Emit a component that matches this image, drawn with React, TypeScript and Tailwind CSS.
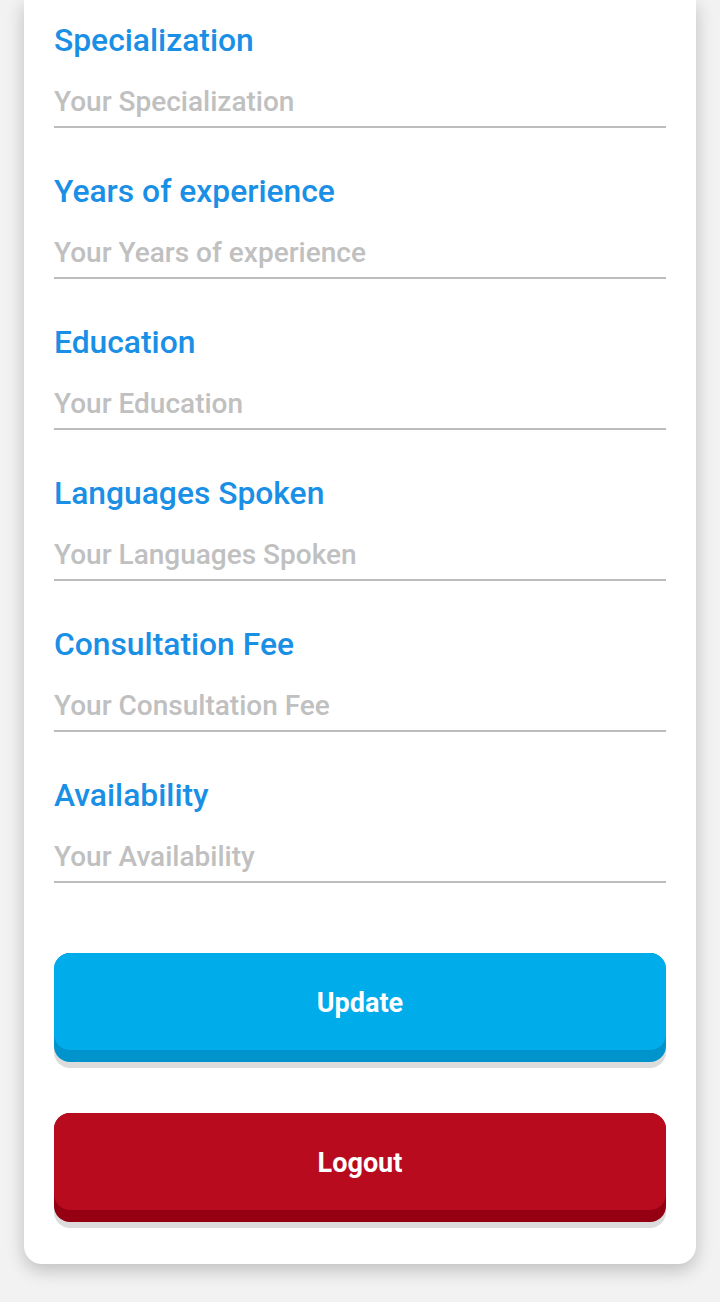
const fields = [
  "Specialization",
  "Years of experience",
  "Education",
  "Languages Spoken",
  "Consultation Fee",
  "Availability",
];

export default function App() {
  return (
    <div className="min-h-[1302px] bg-[#f2f2f2] px-[24px] pb-[39px] font-['Roboto',sans-serif]">
      <div className="bg-white rounded-b-[18px] shadow-[0_6px_18px_rgba(0,0,0,0.22)] px-[30px] pt-[22px] pb-[42px]">
        {fields.map((f) => (
          <div key={f} className="mb-[45px]">
            <div className="h-[36px] leading-[36px] text-[31.8px] font-medium text-[#1a8fe6]">
              {f}
            </div>
            <input
              placeholder={`Your ${f}`}
              className="mt-[16px] block w-full h-[54px] border-b-2 border-[#bdbdbd] text-[28px] font-medium text-gray-700 placeholder:text-[#c0c0c0] outline-none bg-transparent pt-[3px]"
            />
          </div>
        ))}
        <div className="pt-[25px]">
          <button className="block w-full rounded-[16px] bg-[#0093cc] pb-[12px] shadow-[0_6px_0_#dcdcdc]">
            <div className="h-[97px] rounded-[16px] bg-[#00acea] flex items-center justify-center pt-[4px] text-[27px] font-bold text-white">
              Update
            </div>
          </button>
          <button className="mt-[51px] block w-full rounded-[16px] bg-[#940012] pb-[12px] shadow-[0_6px_0_#dcdcdc]">
            <div className="h-[97px] rounded-[16px] bg-[#b80b1e] flex items-center justify-center pt-[4px] text-[27px] font-bold text-white">
              Logout
            </div>
          </button>
        </div>
      </div>
    </div>
  );
}
